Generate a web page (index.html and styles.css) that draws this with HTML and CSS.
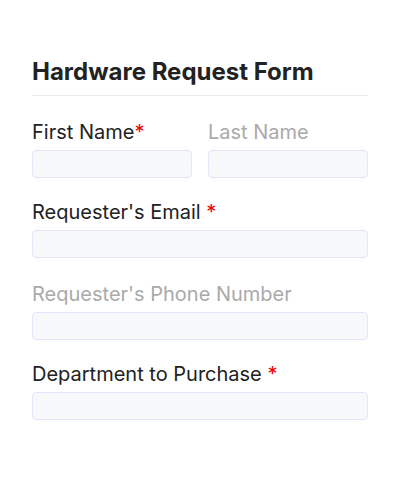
FILE: index.html
```html
<!DOCTYPE html>
<html>
<head>
<meta charset="utf-8">
<link rel="stylesheet" href="styles.css">
</head>
<body>
<form class="form">
  <h1 class="title">Hardware Request Form</h1>
  <div class="row">
    <div class="field">
      <label class="label">First Name<span class="req">*</span></label>
      <div class="input"></div>
    </div>
    <div class="field">
      <label class="label muted">Last Name</label>
      <div class="input"></div>
    </div>
  </div>
  <div class="field">
    <label class="label">Requester's Email <span class="req">*</span></label>
    <div class="input"></div>
  </div>
  <div class="field field-spaced">
    <label class="label muted">Requester's Phone Number</label>
    <div class="input"></div>
  </div>
  <div class="field">
    <label class="label">Department to Purchase <span class="req">*</span></label>
    <div class="input"></div>
  </div>
</form>
</body>
</html>
```
FILE: styles.css
```css
html, body {
  margin: 0;
  padding: 0;
  background: #fff;
}
body {
  font-family: Inter, "Noto Sans", sans-serif;
  color: #222;
}
.form {
  width: 336px;
  margin: 0 32px;
  padding-top: 56px;
  display: flex;
  flex-direction: column;
  gap: 22px;
}
.title {
  margin: 0 0 2px 0;
  font-size: 24px;
  line-height: 32px;
  font-weight: 700;
  color: #222;
  padding-bottom: 7px;
  border-bottom: 1px solid #ebebeb;
}
.row {
  display: flex;
  gap: 16px;
}
.row .field {
  flex: 1;
}
.field {
  display: flex;
  flex-direction: column;
  gap: 6px;
}
.field-spaced {
  margin-top: 2px;
}
.label {
  font-size: 20px;
  line-height: 24px;
  color: #222;
}
.label.muted {
  color: #aaa;
}
.req {
  color: #ee0000;
}
.input {
  height: 26px;
  border: 1px solid #e3e6fb;
  background: #f7f8fa;
  border-radius: 4px;
}
```
